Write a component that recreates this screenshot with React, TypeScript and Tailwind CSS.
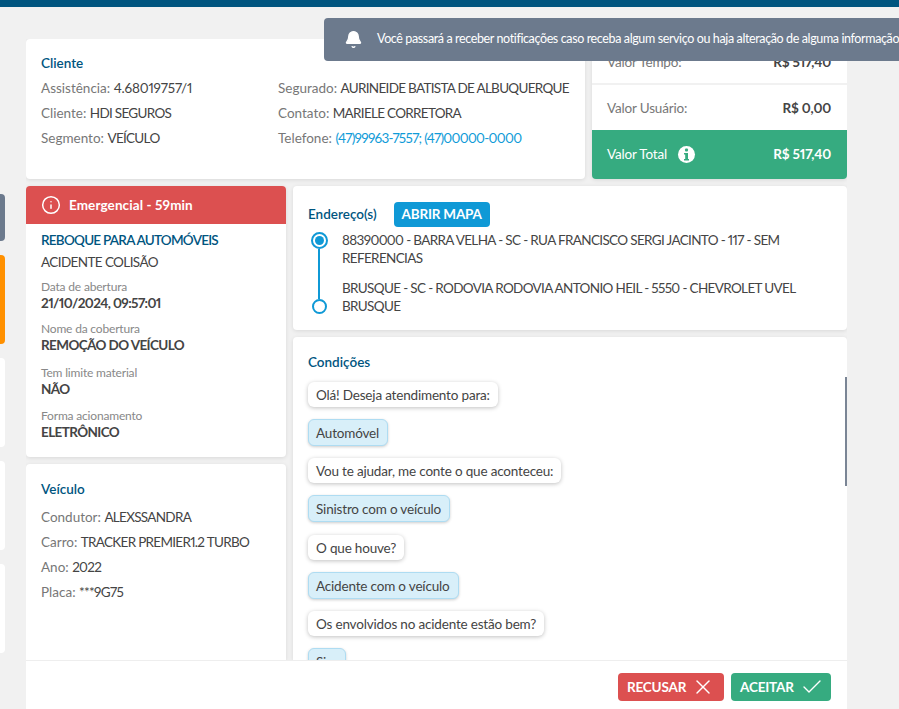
import { Bell, Check, Info, X } from "lucide-react";

const Line = ({ label, value, link, loose }: { label: string; value: string; link?: boolean; loose?: boolean }) => (
  <p className="h-[25px] leading-[25px] whitespace-nowrap text-[#777] tracking-normal">
    {label}:{" "}
    <span className={`${link ? "text-[#0f9bd8]" : "text-[#444]"} ${loose ? "tracking-[-0.18px]" : "tracking-[-0.7px]"}`}>
      {value}
    </span>
  </p>
);

const Field = ({ label, value, className }: { label: string; value: string; className: string }) => (
  <div className={className}>
    <p className="text-[12px] leading-[17px] text-[#888]">{label}</p>
    <p className="-mt-px leading-[18px] font-bold text-[#444] tracking-[-0.6px]">{value}</p>
  </div>
);

const Bubble = ({ text, answer, className }: { text: string; answer?: boolean; className?: string }) =>
  answer ? (
    <div className={`w-fit h-[27px] leading-[26px] pl-[7px] pr-[8px] rounded-md border border-[#aedcf2] bg-[#d8eff9] text-[#444] shadow-[0_1px_3px_rgba(0,0,0,0.2)] whitespace-nowrap ${className ?? ""}`}>
      {text}
    </div>
  ) : (
    <div className={`w-fit h-[25px] leading-[26px] px-2 rounded-md bg-white text-[#444] shadow-[0_1px_4px_rgba(0,0,0,0.25)] whitespace-nowrap ${className ?? ""}`}>
      {text}
    </div>
  );

const cardClass = "bg-white rounded shadow-[0_1px_4px_rgba(0,0,0,0.1)]";
const headingClass = "font-semibold text-[#00557f] tracking-normal";

const App = () => {
  return (
    <div
      className="relative w-[899px] h-[709px] overflow-hidden bg-[#f1f1f1] text-[13.5px] tracking-[-0.18px] proportional-nums"
      style={{ fontFamily: '"Lato", "Noto Sans", sans-serif' }}
    >
      <div className="h-[7px] bg-[#00557f]" />

      <div className="flex h-[702px]">
        {/* cards da fila, cortados na esquerda */}
        <div className="w-[5px] shrink-0 pt-[187px] flex flex-col gap-[14px] overflow-hidden">
          <div className="h-[47px] shrink-0 rounded-r bg-[#6c7a8d]" />
          <div className="h-[89px] shrink-0 rounded-r bg-[#ff9000]" />
          <div className="h-[89px] shrink-0 rounded-r bg-white" />
          <div className="h-[89px] shrink-0 rounded-r bg-white" />
          <div className="h-[89px] shrink-0 rounded-r bg-white" />
        </div>

        <div className="ml-[21px] w-[821px] pt-[32px] flex flex-col">
          <div className="flex-1 min-h-0 overflow-hidden flex flex-col gap-[7px]">
            <div className="flex gap-[7px] shrink-0">
              <div className={`${cardClass} w-[559px] h-[140px] pl-[15px] pt-[12px]`}>
                <h2 className={`h-[24px] leading-[24px] mb-px ${headingClass}`}>Cliente</h2>
                <div className="flex">
                  <div className="w-[237px] shrink-0">
                    <Line label="Assistência" value="4.68019757/1" loose />
                    <Line label="Cliente" value="HDI SEGUROS" />
                    <Line label="Segmento" value="VEÍCULO" />
                  </div>
                  <div>
                    <Line label="Segurado" value="AURINEIDE BATISTA DE ALBUQUERQUE" />
                    <Line label="Contato" value="MARIELE CORRETORA" />
                    <Line label="Telefone" value="(47)99963-7557; (47)00000-0000" link />
                  </div>
                </div>
              </div>

              <div className="w-[255px] h-[140px] flex flex-col rounded overflow-hidden shadow-[0_1px_4px_rgba(0,0,0,0.1)]">
                <div className="h-[44px] mb-[2px] pt-[2px] bg-white flex items-center justify-between pl-[15px] pr-[16px] text-[#777]">
                  <span>Valor Tempo:</span>
                  <span className="font-bold text-[#444]">R$ 517,40</span>
                </div>
                <div className="h-[45px] pt-[2px] bg-white flex items-center justify-between pl-[15px] pr-[16px] text-[#777]">
                  <span>Valor Usuário:</span>
                  <span className="font-bold text-[#444]">R$ 0,00</span>
                </div>
                <div className="flex-1 bg-[#36ab80] flex items-center justify-between pl-[15px] pr-[16px] text-white">
                  <span className="flex items-center gap-[11px]">
                    Valor Total
                    <span className="size-[17px] rounded-full bg-white flex items-center justify-center">
                      <svg width="9" height="13" viewBox="0 0 9 13" fill="#36ab80">
                        <rect x="3" y="0.5" width="3" height="3" rx="1" />
                        <path d="M2 5h4v6h1v1.5H2V11h1.2V6.5H2z" />
                      </svg>
                    </span>
                  </span>
                  <span className="font-bold">R$ 517,40</span>
                </div>
              </div>
            </div>

            <div className="flex gap-[7px] flex-1 min-h-0">
              <div className="w-[260px] shrink-0 flex flex-col gap-[7px]">
                <div className={`${cardClass} h-[271px] shrink-0 overflow-hidden`}>
                  <div className="h-[38px] bg-[#dc5050] flex items-center pl-[15px] gap-[8px] text-white font-bold tracking-[0.1px]">
                    <Info size={20} strokeWidth={1.8} />
                    Emergencial - 59min
                  </div>
                  <div className="pl-[15px] pt-[6px]">
                    <h2 className="h-[20px] leading-[20px] font-semibold text-[#00557f] tracking-[-0.75px] whitespace-nowrap">
                      REBOQUE PARA AUTOMÓVEIS
                    </h2>
                    <p className="h-[24px] leading-[24px] text-[#444] tracking-[-0.6px]">ACIDENTE COLISÃO</p>
                    <Field className="mt-[4px]" label="Data de abertura" value="21/10/2024, 09:57:01" />
                    <Field className="mt-[8px]" label="Nome da cobertura" value="REMOÇÃO DO VEÍCULO" />
                    <Field className="mt-[10px]" label="Tem limite material" value="NÃO" />
                    <Field className="mt-[9px]" label="Forma acionamento" value="ELETRÔNICO" />
                  </div>
                </div>

                <div className={`${cardClass} flex-1 pl-[15px] pt-[13px] rounded-b-none`}>
                  <h2 className={`h-[24px] leading-[24px] mb-[4px] ${headingClass}`}>Veículo</h2>
                  <Line label="Condutor" value="ALEXSSANDRA" />
                  <Line label="Carro" value="TRACKER PREMIER1.2 TURBO" />
                  <Line label="Ano" value="2022" />
                  <Line label="Placa" value="***9G75" />
                </div>
              </div>

              <div className="w-[554px] flex flex-col gap-[7px]">
                <div className={`${cardClass} h-[144px] shrink-0 pl-[15px] pt-[16px]`}>
                  <div className="flex items-center gap-[17px] h-[25px]">
                    <h2 className={headingClass}>Endereço(s)</h2>
                    <button className="h-[25px] w-[96px] rounded bg-[#0f99d6] text-white font-bold">ABRIR MAPA</button>
                  </div>
                  <div className="flex mt-[4px]">
                    <div className="w-[22px] mr-[12px] pt-[1px] flex flex-col items-center shrink-0">
                      <span className="size-[17px] rounded-full border-2 border-[#0f99d6] flex items-center justify-center">
                        <span className="size-[9px] rounded-full bg-[#0f99d6]" />
                      </span>
                      <span className="w-[2px] h-[50px] bg-[#0f99d6]" />
                      <span className="size-[15px] rounded-full border-2 border-[#0f99d6]" />
                    </div>
                    <div className="w-[495px] pt-px text-[#444] leading-[17.5px] tracking-[-0.65px]">
                      <p className="mb-[13px]">88390000 - BARRA VELHA - SC - RUA FRANCISCO SERGI JACINTO - 117 - SEM REFERENCIAS</p>
                      <p>BRUSQUE - SC - RODOVIA RODOVIA ANTONIO HEIL - 5550 - CHEVROLET UVEL BRUSQUE</p>
                    </div>
                  </div>
                </div>

                <div className={`${cardClass} relative flex-1 min-h-0 overflow-hidden pl-[15px] pt-[13px] rounded-b-none`}>
                  <h2 className={`h-[24px] leading-[24px] ${headingClass}`}>Condições</h2>
                  <div className="mt-[8px] flex flex-col gap-[12px]">
                    <Bubble text="Olá! Deseja atendimento para:" />
                    <Bubble text="Automóvel" answer />
                    <Bubble text="Vou te ajudar, me conte o que aconteceu:" />
                    <Bubble text="Sinistro com o veículo" answer />
                    <Bubble text="O que houve?" className="mt-px" />
                    <Bubble text="Acidente com o veículo" answer />
                    <Bubble text="Os envolvidos no acidente estão bem?" />
                    <Bubble text="Sim" answer />
                  </div>
                  <div className="absolute right-0 top-[40px] w-[2px] h-[109px] bg-[#7a8595]" />
                </div>
              </div>
            </div>
          </div>

          <div className="h-[49px] shrink-0 bg-white border-t border-[#eeeeee] flex justify-end items-start gap-[7px] pt-[12px] pr-[16px]">
            <button className="w-[106px] h-[28px] rounded bg-[#dc5050] text-white font-bold flex items-center pl-[9px] gap-[5px]">
              RECUSAR
              <X size={24} strokeWidth={1.4} />
            </button>
            <button className="w-[100px] h-[28px] rounded bg-[#36ab80] text-white font-bold flex items-center pl-[9px] gap-[6px]">
              ACEITAR
              <Check size={24} strokeWidth={1.4} />
            </button>
          </div>
        </div>
      </div>

      {/* aviso sobre o conteúdo */}
      <div className="absolute left-[324px] top-[18px] w-[600px] h-[43px] rounded-l bg-[#6c7a8d] flex items-center pl-[20px] text-white text-[12.5px] tracking-[-0.38px] whitespace-nowrap">
        <Bell size={19} fill="white" strokeWidth={1.5} className="shrink-0" />
        <span className="ml-[14px]">
          Você passará a receber notificações caso receba algum serviço ou haja alteração de alguma informação
        </span>
      </div>
    </div>
  );
};

export default App;
